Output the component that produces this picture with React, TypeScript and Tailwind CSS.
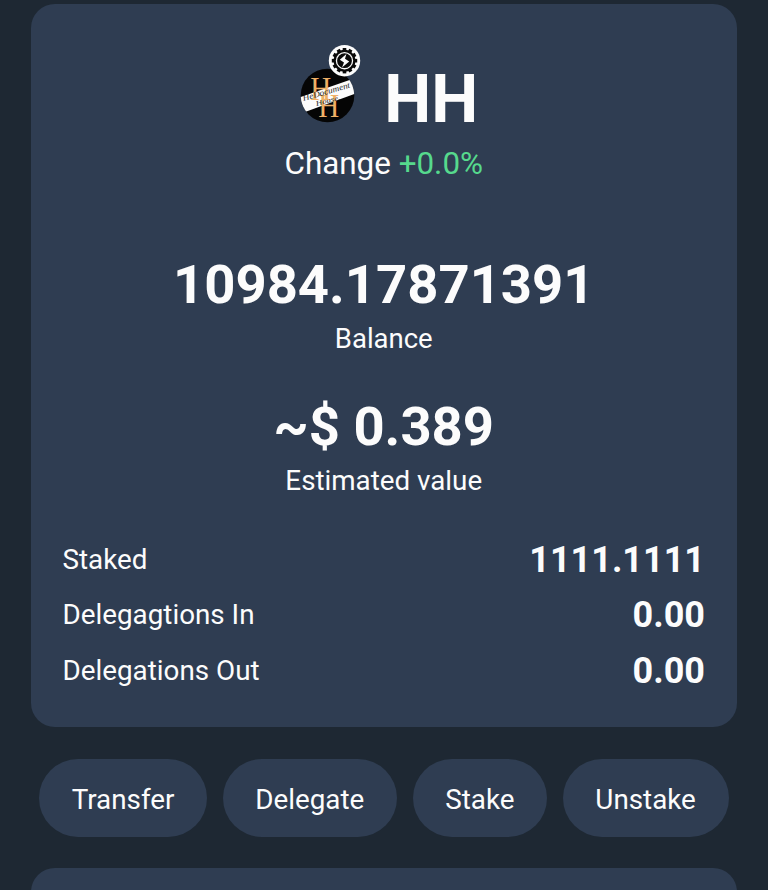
import React from 'react';

const stats = [
  { label: 'Staked', value: '1111.1111' },
  { label: 'Delegagtions In', value: '0.00' },
  { label: 'Delegations Out', value: '0.00' },
];

const actions = ['Transfer', 'Delegate', 'Stake', 'Unstake'];

const teeth = Array.from({ length: 12 }, (_, i) => i * 30);

const TokenLogo: React.FC = () => (
  <svg width="62" height="80" viewBox="299 43 62 80" className="block shrink-0">
    <defs>
      <clipPath id="coin">
        <circle cx="327.5" cy="95.5" r="26.8" />
      </clipPath>
    </defs>
    <circle cx="327.5" cy="95.5" r="26.8" fill="#050505" />
    <g clipPath="url(#coin)">
      <polygon points="299,97.5 351,79.5 356,93.5 305,112" fill="#fcfcfc" />
    </g>
    <g fontFamily="'Liberation Serif', serif" fill="#efb066">
      <text x="310.3" y="99.5" fontSize="34" textLength="21" lengthAdjust="spacingAndGlyphs">H</text>
      <text x="318.3" y="117" fontSize="34" textLength="21" lengthAdjust="spacingAndGlyphs">H</text>
    </g>
    <g fontFamily="'Liberation Serif', serif" fontStyle="italic" fill="#1c1c1c">
      <text transform="translate(303.5 101) rotate(-16)" fontSize="8.5" textLength="49" lengthAdjust="spacingAndGlyphs">HeDocument</text>
      <text transform="translate(316.5 106) rotate(-15)" fontSize="7" textLength="25" lengthAdjust="spacingAndGlyphs">House.</text>
    </g>
    <circle cx="344.5" cy="60.7" r="15.7" fill="#fcfcfc" />
    {teeth.map((angle) => (
      <rect key={angle} x="342.7" y="48" width="3.6" height="3" fill="#0a0a0a" transform={`rotate(${angle} 344.5 60.7)`} />
    ))}
    <circle cx="344.5" cy="60.7" r="9.8" fill="#fcfcfc" stroke="#0a0a0a" strokeWidth="2.2" />
    <circle cx="344.5" cy="60.7" r="7.4" fill="#0a0a0a" />
    <path d="M346.4 54 L339.8 59.8 L344 62.4 L342 67.4 L349.2 61.4 L345 58.8 Z" fill="#fcfcfc" />
  </svg>
);

const App: React.FC = () => {
  return (
    <div className="h-[890px] w-[768px] overflow-hidden bg-[#1e2833] pt-1 font-['Roboto',sans-serif] text-[#fcfcfc]">
      <div className="ml-[31px] h-[723px] w-[705.5px] rounded-[24px] bg-[#2f3d52] px-[31.5px] pt-[39px]">
        <div className="flex h-[95px] items-start justify-center gap-[23.5px] pl-[9.5px]">
          <TokenLogo />
          <h1 className="pt-[17px] text-[66.5px] leading-[78px] font-bold">HH</h1>
        </div>

        <div className="mt-[8px] text-center text-[31.4px] leading-[36px]">
          Change <span className="text-[#56d98d]">+0.0%</span>
        </div>

        <div className="mt-[71px] text-center">
          <div className="text-[54.4px] leading-[64px] font-bold">10984.17871391</div>
          <div className="mt-[6px] text-[27.5px] leading-[32px]">Balance</div>
        </div>

        <div className="mt-[40px] text-center">
          <div className="text-[54.4px] leading-[64px] font-bold">~$ 0.389</div>
          <div className="mt-[6px] text-[27.75px] leading-[32px]">Estimated value</div>
        </div>

        <div className="mt-[42px] flex flex-col gap-[13.4px]">
          {stats.map((stat) => (
            <div key={stat.label} className="flex items-center justify-between leading-[42px]">
              <span className="text-[27.8px]">{stat.label}</span>
              <span className="text-[36px] font-bold">{stat.value}</span>
            </div>
          ))}
        </div>
      </div>

      <div className="mt-[31.5px] flex justify-center gap-[15.5px] pr-[0.5px]">
        {actions.map((action) => (
          <button key={action} className="h-[78px] rounded-full bg-[#2f3d52] px-[32.7px] pt-1 text-[27.8px] leading-[32px]">
            {action}
          </button>
        ))}
      </div>

      <div className="mt-[31.5px] ml-[31px] h-[60px] w-[705.5px] rounded-[24px] bg-[#2f3d52]" />
    </div>
  );
};

export default App;
